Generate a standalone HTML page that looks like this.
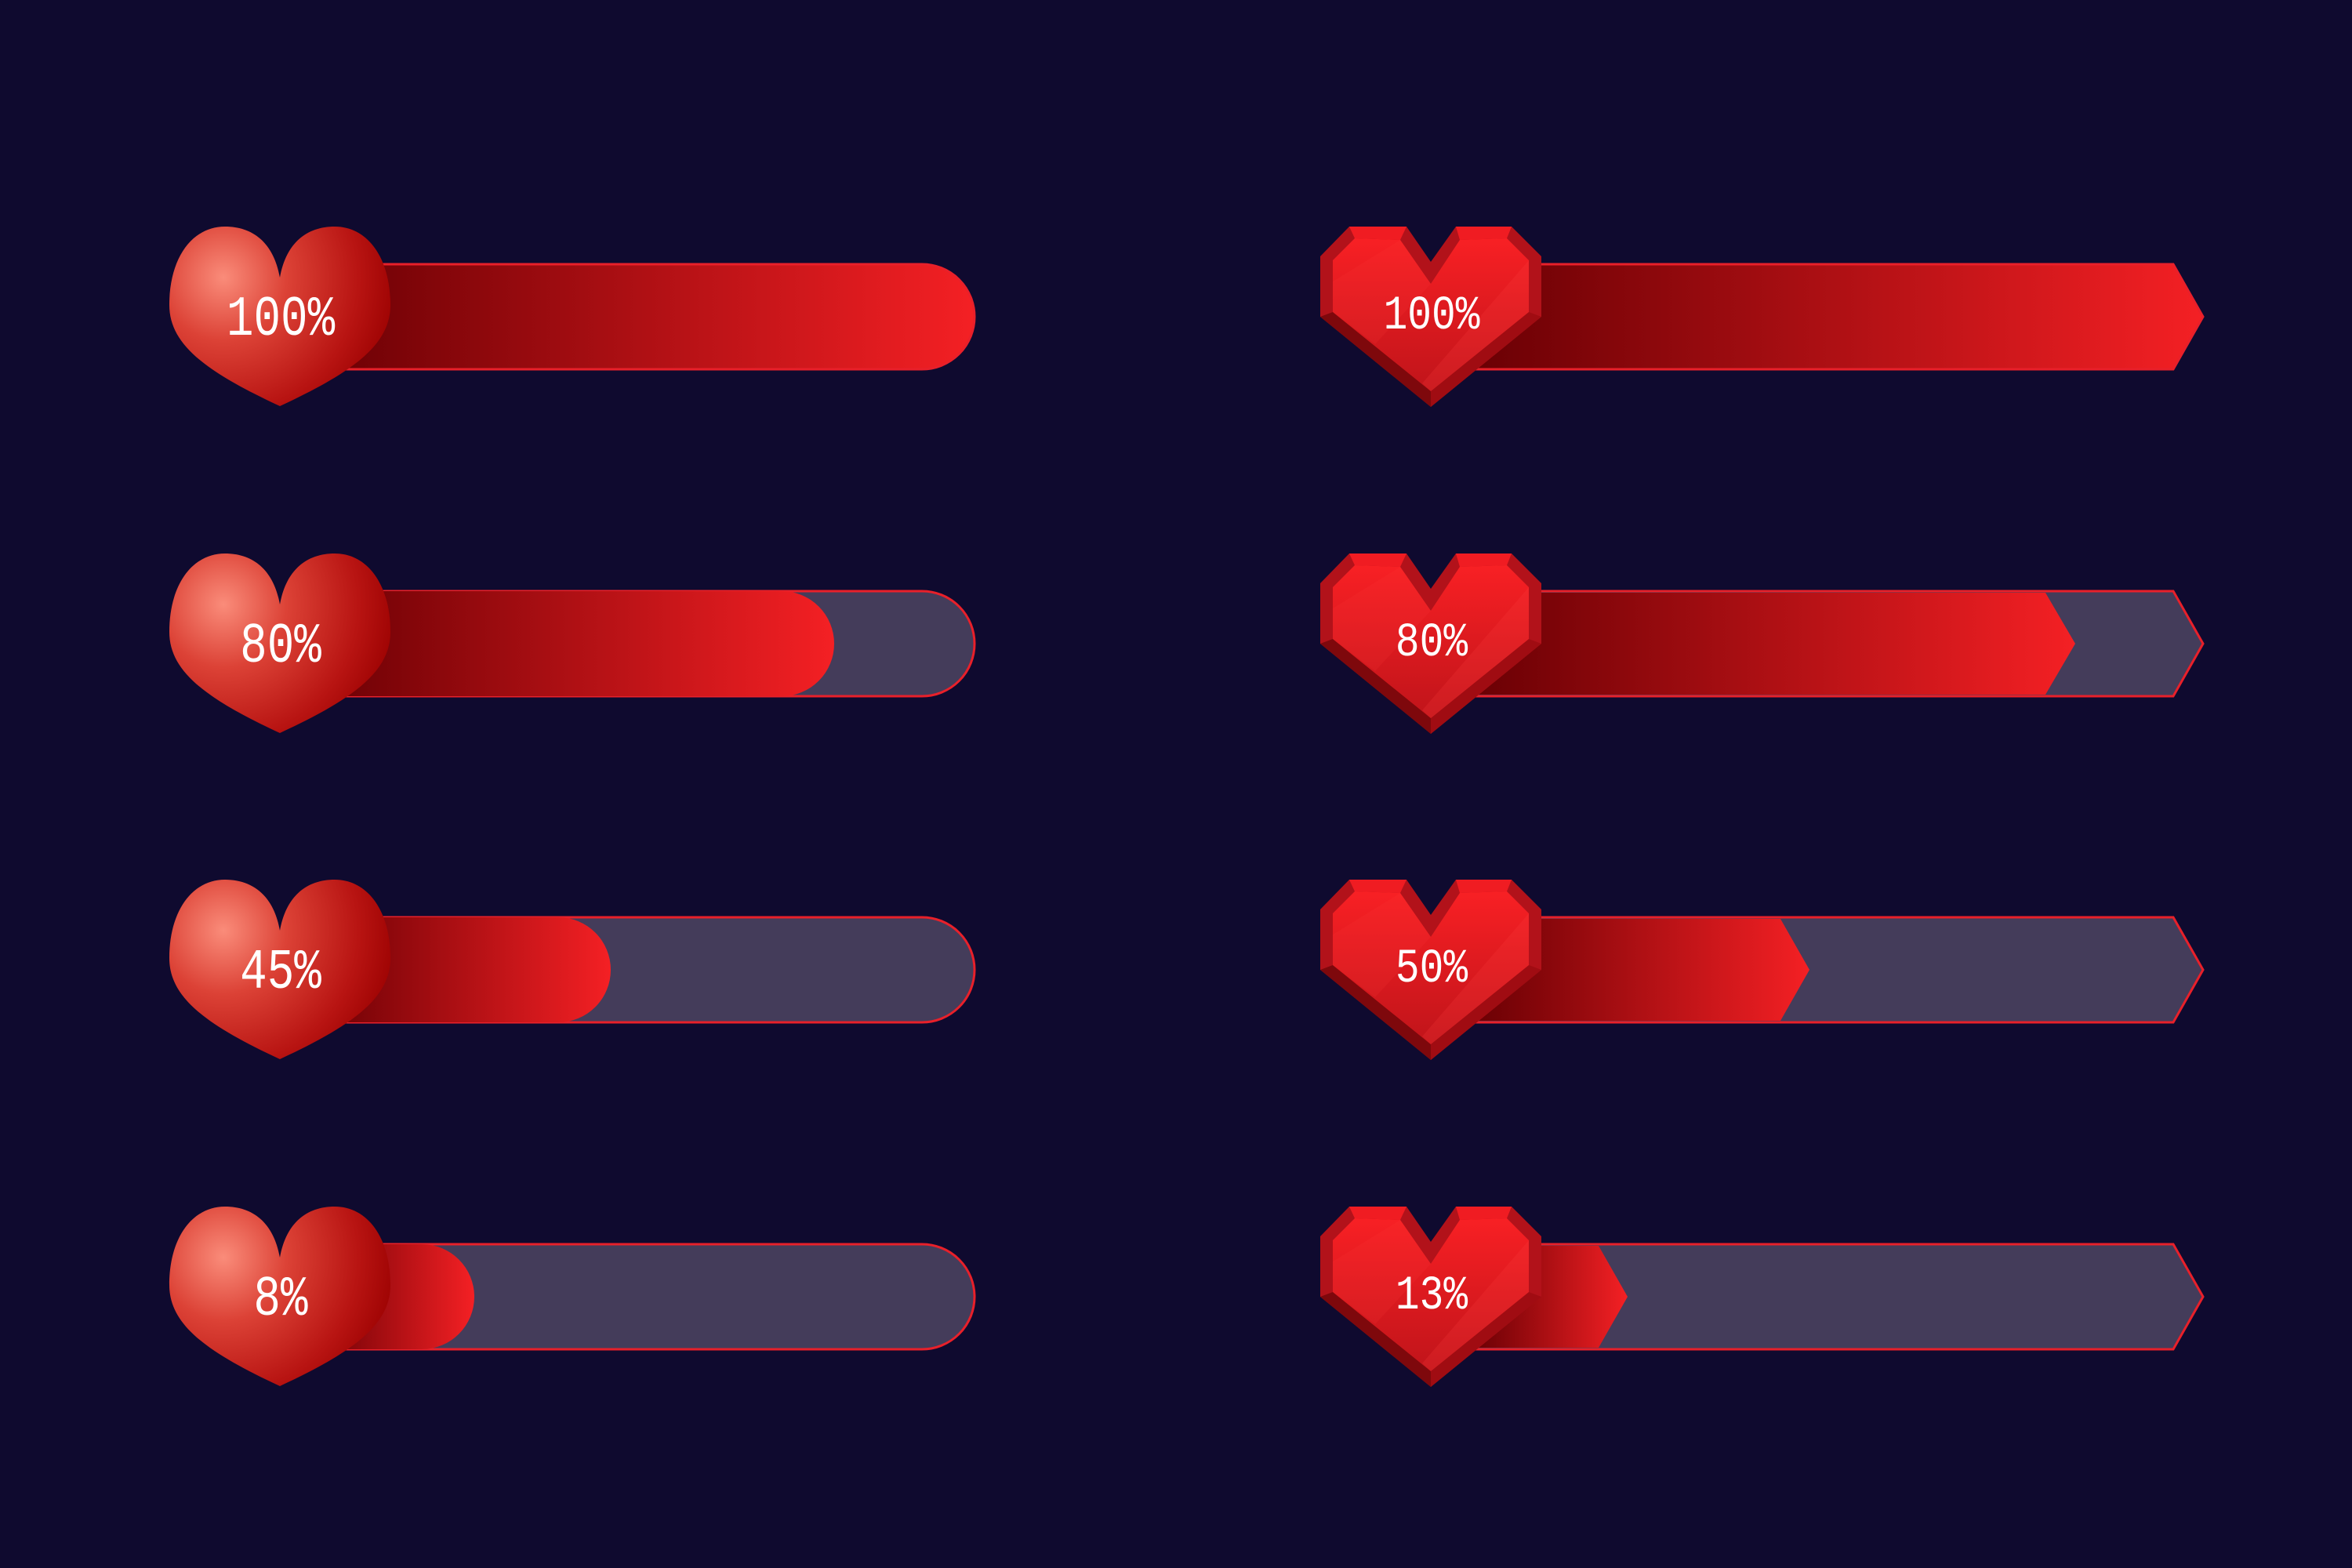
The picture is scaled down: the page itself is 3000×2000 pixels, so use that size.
<!DOCTYPE html>
<html><head><meta charset="utf-8"><style>
html,body{margin:0;padding:0;background:#0f0a2f;}
svg{display:block}
text{font-family:"Liberation Mono",monospace;fill:#fff;font-size:72px;text-anchor:middle;}
</style></head><body>
<svg width="3000" height="2000" viewBox="0 0 3000 2000" xmlns="http://www.w3.org/2000/svg">
<defs>
<linearGradient id="fg" x1="0" y1="0" x2="1" y2="0">
<stop offset="0" stop-color="#6a0004"/><stop offset="1" stop-color="#f42024"/></linearGradient>
<radialGradient id="hg" gradientUnits="userSpaceOnUse" cx="-72" cy="65" r="230">
<stop offset="0" stop-color="#fa8c7a"/><stop offset="0.35" stop-color="#dc4236"/><stop offset="0.75" stop-color="#b81412"/><stop offset="1" stop-color="#9a0000"/></radialGradient>
<linearGradient id="gi" x1="0" y1="0" x2="0" y2="1">
<stop offset="0" stop-color="#f82024"/><stop offset="1" stop-color="#c0141a"/></linearGradient>
<g id="lh">
<path d="M0,65 C-8,20 -35,0 -70,0 C-112,0 -141,40 -141,100 C-141,150 -95,185 0,229 C95,185 141,150 141,100 C141,40 112,0 70,0 C35,0 8,20 0,65 Z" fill="url(#hg)"/>
</g>
<g id="gh">
<polygon points="37,0 110,0 141,45 173,0 244,0 282,38 282,115 141,230 0,115 0,38" fill="#b2121a"/>
<polygon points="0,115 141,230 141,210 16,109" fill="#7e080c"/>
<polygon points="282,115 141,230 141,210 266,109" fill="#a00c12"/>
<polygon points="37,0 110,0 102,17 44,15" fill="#f01c22"/>
<polygon points="173,0 244,0 238,15 178,17" fill="#f01c22"/>
<polygon points="44,15 102,17 141,73 178,17 238,15 266,43 266,109 141,210 16,109 16,43" fill="url(#gi)"/>
<polygon points="102,17 141,73 70,150 16,109 16,70" fill="#ff3a3a" opacity="0.15"/>
<polygon points="266,43 266,109 141,210 130,200" fill="#ff4040" opacity="0.2"/>
</g>
</defs>

<!-- LEFT -->
<g>
<path d="M400,337 H1176 A67,67 0 0 1 1176,471 H400 Z" fill="url(#fg)" stroke="#e8202a" stroke-width="3"/>
<use href="#lh" x="357" y="289"/>
<text transform="translate(358,427) scale(0.8,1)">100%</text>
</g>
<g transform="translate(0,417)">
<path d="M400,337 H1176 A67,67 0 0 1 1176,471 H400 Z" fill="#443c5a" stroke="#e8202a" stroke-width="3"/>
<path d="M400,337 H997 A67,67 0 0 1 997,471 H400 Z" fill="url(#fg)"/>
<use href="#lh" x="357" y="289"/>
<text transform="translate(358,427) scale(0.8,1)">80%</text>
</g>
<g transform="translate(0,833)">
<path d="M400,337 H1176 A67,67 0 0 1 1176,471 H400 Z" fill="#443c5a" stroke="#e8202a" stroke-width="3"/>
<path d="M400,337 H712 A67,67 0 0 1 712,471 H400 Z" fill="url(#fg)"/>
<use href="#lh" x="357" y="289"/>
<text transform="translate(358,427) scale(0.8,1)">45%</text>
</g>
<g transform="translate(0,1250)">
<path d="M400,337 H1176 A67,67 0 0 1 1176,471 H400 Z" fill="#443c5a" stroke="#e8202a" stroke-width="3"/>
<path d="M400,337 H538 A67,67 0 0 1 538,471 H400 Z" fill="url(#fg)"/>
<use href="#lh" x="357" y="289"/>
<text transform="translate(358,427) scale(0.8,1)">8%</text>
</g>

<!-- RIGHT -->
<g>
<path d="M1880,337 H2772 L2810,404 L2772,471 H1880 Z" fill="url(#fg)" stroke="#e8202a" stroke-width="3"/>
<use href="#gh" x="1684" y="289"/>
<text transform="translate(1826,419) scale(0.8,0.95)" style="font-size:64px">100%</text>
</g>
<g transform="translate(0,417)">
<path d="M1880,337 H2772 L2810,404 L2772,471 H1880 Z" fill="#443c5a" stroke="#e8202a" stroke-width="3"/>
<path d="M1880,339 H2609 L2647,404 L2609,469 H1880 Z" fill="url(#fg)"/>
<use href="#gh" x="1684" y="289"/>
<text transform="translate(1826,419) scale(0.8,0.95)" style="font-size:64px">80%</text>
</g>
<g transform="translate(0,833)">
<path d="M1880,337 H2772 L2810,404 L2772,471 H1880 Z" fill="#443c5a" stroke="#e8202a" stroke-width="3"/>
<path d="M1880,339 H2271 L2308,404 L2271,469 H1880 Z" fill="url(#fg)"/>
<use href="#gh" x="1684" y="289"/>
<text transform="translate(1826,419) scale(0.8,0.95)" style="font-size:64px">50%</text>
</g>
<g transform="translate(0,1250)">
<path d="M1880,337 H2772 L2810,404 L2772,471 H1880 Z" fill="#443c5a" stroke="#e8202a" stroke-width="3"/>
<path d="M1880,339 H2039 L2076,404 L2039,469 H1880 Z" fill="url(#fg)"/>
<use href="#gh" x="1684" y="289"/>
<text transform="translate(1826,419) scale(0.8,0.95)" style="font-size:64px">13%</text>
</g>
</svg>
</body></html>
